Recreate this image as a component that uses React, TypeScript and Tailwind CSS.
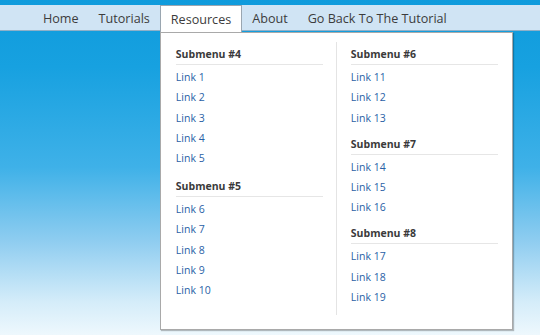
import React from "react";

interface ISection {
  title: string;
  links: string[];
}

const leftColumn: ISection[] = [
  { title: "Submenu #4", links: ["Link 1", "Link 2", "Link 3", "Link 4", "Link 5"] },
  { title: "Submenu #5", links: ["Link 6", "Link 7", "Link 8", "Link 9", "Link 10"] },
];

const rightColumn: ISection[] = [
  { title: "Submenu #6", links: ["Link 11", "Link 12", "Link 13"] },
  { title: "Submenu #7", links: ["Link 14", "Link 15", "Link 16"] },
  { title: "Submenu #8", links: ["Link 17", "Link 18", "Link 19"] },
];

const Section: React.FC<{ section: ISection; gap: string }> = ({ section, gap }) => (
  <div className={gap}>
    <h3 className="text-[10.5px] font-bold text-[#3a3a3a] leading-[14px] pb-[3px] border-b border-[#e6e6e6]">
      {section.title}
    </h3>
    <ul className="pt-[3px]">
      {section.links.map((link) => (
        <li key={link} className="h-[20.2px] flex items-center text-[10.5px] text-[#2a5fa6]">
          <a href="#">{link}</a>
        </li>
      ))}
    </ul>
  </div>
);

const App: React.FC = () => {
  const items = ["Home", "Tutorials", "Resources", "About", "Go Back To The Tutorial"];

  return (
    <div
      className="w-[540px] h-[335px] overflow-hidden pt-[5px] bg-[linear-gradient(to_bottom,#0f9bdc_0%,#17a1e0_20%,#3fb1e8_50%,#8fcdf0_72%,#d4ecf9_90%,#eef8fd_100%)]"
      style={{ fontFamily: '"Open Sans", "Noto Sans", sans-serif' }}
    >
      {/* Nav bar */}
      <nav className="relative h-[26px] bg-[#d0e4f4] border-b border-[#8fb0c8]">
        <ul className="flex h-full pl-[33px] text-[12.6px] text-[#3c3c3c]">
          {items.map((item) =>
            item === "Resources" ? (
              <li key={item} className="relative h-[27px] px-[10px] pt-[3px] bg-white border-x border-t border-[#9aa6b0] flex items-center z-10">
                {item}
                {/* Dropdown */}
                <div className="absolute left-[-1px] top-[26px] w-[353px] h-[298px] bg-white border border-[#a9a9a9] shadow-[1px_1px_1px_rgba(0,0,0,0.25)] flex pl-[15px] pr-[14px] pt-[14px]">
                  <div className="w-[148px]">
                    {leftColumn.map((s) => (
                      <Section key={s.title} section={s} gap="mb-[10px]" />
                    ))}
                  </div>
                  <div className="ml-[13px] mr-[14px] mt-[-5px] mb-[14px] w-px bg-[#e4e4e4]" />
                  <div className="w-[148px]">
                    {rightColumn.map((s) => (
                      <Section key={s.title} section={s} gap="mb-[8px]" />
                    ))}
                  </div>
                </div>
              </li>
            ) : (
              <li key={item} className="h-full px-[10px] pt-[3px] flex items-center">
                {item}
              </li>
            )
          )}
        </ul>
      </nav>
    </div>
  );
};

export default App;
